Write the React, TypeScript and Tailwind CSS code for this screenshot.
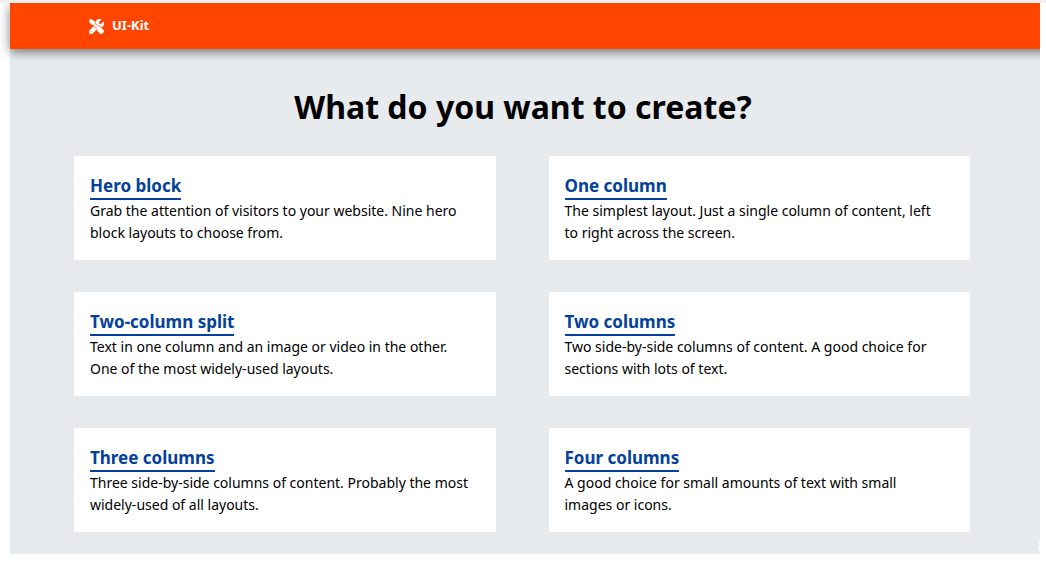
import { FaScrewdriverWrench } from "react-icons/fa6";

const layouts = [
  {
    title: "Hero block",
    text: "Grab the attention of visitors to your website. Nine hero block layouts to choose from.",
  },
  {
    title: "One column",
    text: "The simplest layout. Just a single column of content, left to right across the screen.",
  },
  {
    title: "Two-column split",
    text: "Text in one column and an image or video in the other. One of the most widely-used layouts.",
  },
  {
    title: "Two columns",
    text: "Two side-by-side columns of content. A good choice for sections with lots of text.",
  },
  {
    title: "Three columns",
    text: "Three side-by-side columns of content. Probably the most widely-used of all layouts.",
  },
  {
    title: "Four columns",
    text: "A good choice for small amounts of text with small images or icons.",
  },
];

function Header() {
  return (
    <header className="relative -mr-6 bg-[#ff4500] px-[79px] py-3 shadow-[0_3px_10px_rgba(0,0,0,0.5)]">
      <a href="#" className="flex h-[22px] items-center gap-2 text-[13px] font-bold text-white">
        <FaScrewdriverWrench className="size-[15px] stroke-white stroke-[20px]" aria-hidden="true" />
        UI-Kit
      </a>
    </header>
  );
}

function LayoutCard({ title, text }: { title: string; text: string }) {
  return (
    <article className="bg-white py-4 pr-6 pl-4">
      <h2 className="flex pt-0.5 text-[17px] leading-6 font-bold">
        <a href="#" className="border-b-2 border-[#04419a] text-[#04419a]">
          {title}
        </a>
      </h2>
      <p className="text-[14px] leading-[22px]">{text}</p>
    </article>
  );
}

export default function App() {
  return (
    <div className="bg-white font-['Noto_Sans','Open_Sans',sans-serif] text-black">
      <div className="h-[3px] bg-[#eeeeee]" />
      <div className="relative mr-1.5 overflow-hidden pl-2.5">
        <Header />
        <main className="bg-[#e7ebee] px-16 pt-8 pb-[22px]">
          <h1 className="mb-6 pr-1 text-center text-[32px] leading-[51px] font-bold">
            What do you want to create?
          </h1>
          <div className="mr-1.5 grid grid-cols-2 gap-x-[53px] gap-y-8">
            {layouts.map((layout) => (
              <LayoutCard key={layout.title} {...layout} />
            ))}
          </div>
        </main>
        <svg
          className="absolute right-0 bottom-1 h-2 w-0.5"
          viewBox="0 0 2 8"
          fill="#ffffff"
          aria-hidden="true"
        >
          <path d="M1 0H2V8H0V7H1Z" />
        </svg>
      </div>
    </div>
  );
}
